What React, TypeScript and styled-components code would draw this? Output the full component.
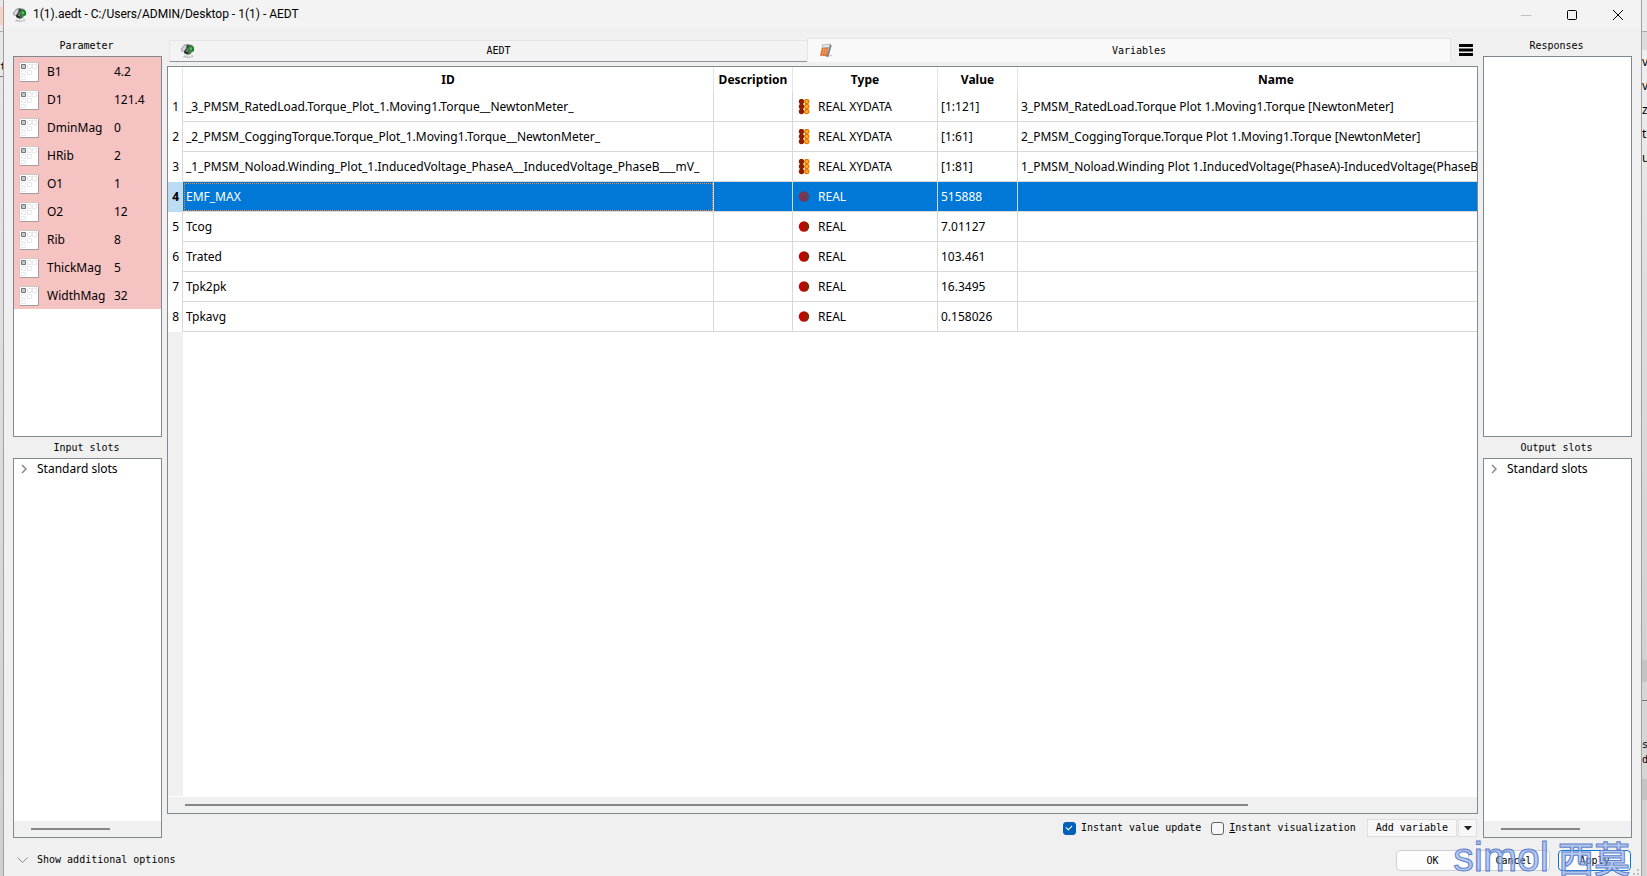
import React from "react";
import styled, { createGlobalStyle, css } from "styled-components";

const sans = `"Noto Sans", "Open Sans", sans-serif`;
const mono = `"DejaVu Sans Mono", "Noto Sans CJK SC", monospace`;
const frame = "#828790";
const face = "#f0f0f0";

const GlobalStyle = createGlobalStyle`
  *, *::before, *::after { box-sizing: border-box; }
  body { margin: 0; background: #d4d4d4; color: #000; font: 12px/20px ${sans}; overflow: hidden; }
  button, input { font: inherit; color: inherit; margin: 0; padding: 0; }
  svg { display: block; flex: none; }
`;

const Desktop = styled.div`
  display: flex;
  height: 100vh;
  min-height: 480px;
`;

const Strip = styled.div<{ $width: number }>`
  flex: none;
  width: ${(p) => p.$width}px;
  display: flex;
  flex-direction: column;
  overflow: hidden;
  white-space: nowrap;
`;

const Band = styled.div<{ $height?: number; $bg: string; $line?: string }>`
  flex: ${(p) => (p.$height ? "none" : "1")};
  height: ${(p) => (p.$height ? `${p.$height}px` : "auto")};
  background: ${(p) => p.$bg};
  border-bottom: ${(p) => (p.$line ? `1px solid ${p.$line}` : "0")};
`;

const StripText = styled.div<{ $mono?: boolean }>`
  font-family: ${(p) => (p.$mono ? mono : sans)};
  font-size: ${(p) => (p.$mono ? 10 : 12)}px;
  line-height: ${(p) => (p.$mono ? 15 : 24)}px;
`;

const Window = styled.main`
  position: relative;
  flex: 1;
  min-width: 0;
  display: flex;
  flex-direction: column;
  border: solid #a0a0a0;
  border-width: 0 1px;
  background: ${face};
`;

const TitleBar = styled.header`
  display: flex;
  align-items: center;
  height: 29px;
  padding-left: 8px;
  background: #f3f3f3;
`;

const Title = styled.h1`
  flex: 1;
  margin: 0 0 2px 5px;
  font: 400 12px/20px Roboto, ${sans};
`;

const CaptionButton = styled.button`
  width: 46px;
  height: 26px;
  display: grid;
  place-items: center;
  border: 0;
  background: none;
`;

const Body = styled.div`
  flex: 1;
  min-height: 0;
  display: grid;
  grid-template-columns: 149px minmax(0, 1fr) 149px;
  gap: 5px;
  padding: 0 9px;
`;

const Side = styled.aside`
  display: flex;
  flex-direction: column;
  min-height: 0;
  padding-top: 6px;
`;

const PaneTitle = styled.h2`
  margin: 0;
  padding-right: 2px;
  font: 400 10px/21px ${mono};
  text-align: center;
`;

const Pane = styled.section`
  flex: 1 1 0;
  min-height: 0;
  display: flex;
  flex-direction: column;
  border: 1px solid ${frame};
  background: #fff;
  overflow: hidden;
`;

const ParamTable = styled.table`
  width: 100%;
  border-collapse: collapse;
  background: #f6c3c3;
  line-height: 20px;

  td, th {
    height: 28px;
    padding: 2px 0 0;
    font-weight: 400;
    text-align: left;
    white-space: nowrap;
  }
  td:first-child { width: 33px; padding-left: 5px; }
  th { width: 67px; }
`;

const TreeItem = styled.button`
  display: flex;
  align-items: center;
  gap: 9px;
  height: 20px;
  padding: 0 6px;
  border: 0;
  background: none;
`;

const Spacer = styled.div`
  flex: 1;
`;

const ScrollTrack = styled.div<{ $inset: number }>`
  flex: none;
  display: flex;
  align-items: center;
  height: 16px;
  padding-left: ${(p) => p.$inset}px;
  background: ${face};
`;

const ScrollThumb = styled.div<{ $share: number }>`
  width: ${(p) => p.$share}%;
  height: 2px;
  background: #868686;
`;

const Center = styled.section`
  display: flex;
  flex-direction: column;
  min-width: 0;
  min-height: 0;
  padding-top: 9px;
`;

const TabBar = styled.div`
  display: flex;
  align-items: flex-end;
  height: 28px;
  padding: 0 0 4px 2px;
`;

const Tab = styled.button<{ $active?: boolean }>`
  flex: 1 1 ${(p) => (p.$active ? 66 : 60)}px;
  display: flex;
  align-items: center;
  height: ${(p) => (p.$active ? 24 : 22)}px;
  padding: 0 6px 0 10px;
  border: 1px solid #e5e5e5;
  border-right-width: ${(p) => (p.$active ? 1 : 0)}px;
  border-bottom: ${(p) => (p.$active ? "0" : "1px solid #919399")};
  background: ${(p) => (p.$active ? "#f9f9f9" : "#f3f3f3")};
  font: 10px/20px ${mono};

  span { flex: 1; }
`;

const MenuButton = styled.button`
  flex: none;
  width: 27px;
  height: 24px;
  display: grid;
  place-items: center;
  padding-left: 2px;
  border: 0;
  background: none;
`;

const GridView = styled.div`
  flex: 1;
  min-height: 0;
  display: flex;
  flex-direction: column;
  border: 1px solid ${frame};
  background: #fff;
  overflow: hidden;
`;

const GridTable = styled.table`
  flex: none;
  width: 1367px;
  min-width: 100%;
  table-layout: fixed;
  border-collapse: separate;
  border-spacing: 0;
  line-height: 20px;
`;

const HeadCell = styled.th`
  height: 25px;
  padding: 0;
  border-right: 1px solid #e5e5e5;
  font-weight: 700;
  text-align: center;
  white-space: nowrap;
`;

const RowHead = styled.th<{ $selected: boolean }>`
  padding: 0 3px 0 0;
  border-right: 1px solid #d8d8d8;
  background: ${(p) => (p.$selected ? "#bcdcf4" : "#fff")};
  font-weight: ${(p) => (p.$selected ? 700 : 400)};
  text-align: right;
`;

const Cell = styled.td<{ $selected: boolean; $focus?: boolean }>`
  height: 30px;
  padding: 0 3px;
  border: solid #d8d8d8;
  border-width: 0 1px 1px 0;
  white-space: nowrap;
  overflow: hidden;
  ${(p) => p.$selected && css`background: #0078d7; color: #fff;`}
  ${(p) => p.$focus && css`outline: 1px dotted #ff8728; outline-offset: -2px;`}
`;

const TypeLabel = styled.span`
  display: flex;
  align-items: center;
  gap: 6px;
`;

const RowGutter = styled.div`
  flex: 1;
  width: 15px;
  margin-bottom: 1px;
  background: ${face};
`;

const Options = styled.div`
  display: flex;
  align-items: center;
  justify-content: flex-end;
  height: 24px;
  padding: 4px 1px 0 0;
  font: 10px/18px ${mono};
`;

const CheckLabel = styled.label`
  display: flex;
  align-items: center;
  gap: 5px;
  margin-right: 10px;
`;

const CheckBox = styled.input`
  appearance: none;
  display: grid;
  place-items: center;
  width: 13px;
  height: 13px;
  border: 1px solid #626262;
  border-radius: 3px;
  background: #f6f6f6;

  &:checked { background: #005fb8; border-color: #005fb8; }
  &:checked::after {
    content: "";
    width: 6px;
    height: 4px;
    border: solid #fff;
    border-width: 0 0 1px 1px;
    transform: translateY(-1px) rotate(-45deg);
  }
`;

const FlatButton = styled.button`
  display: grid;
  place-items: center;
  height: 18px;
  min-width: 19px;
  border: 1px solid #dfdfdf;
  background: #f7f7f7;
  margin-left: 1px;

  span { padding: 0 8px; line-height: 16px; }
`;

const Footer = styled.footer`
  display: flex;
  align-items: center;
  gap: 8px;
  height: 38px;
  padding: 6px 10px 0 13px;
  font: 10px/20px ${mono};
`;

const Disclosure = styled.button`
  display: flex;
  align-items: center;
  gap: 9px;
  margin-right: auto;
  border: 0;
  background: none;
`;

const PushButton = styled.button<{ $primary?: boolean }>`
  width: 73px;
  height: 21px;
  border: 1px solid ${(p) => (p.$primary ? "#0078d4" : "#d0d0d0")};
  border-radius: 4px;
  background: #fdfdfd;
`;

const Watermark = styled.div`
  position: absolute;
  right: 11px;
  bottom: 1px;
  display: flex;
  align-items: center;
  gap: 9px;
  pointer-events: none;
  color: rgba(140, 170, 230, 0.6);
  -webkit-text-stroke: 1px #5b7fce;
  font: 41px/36px "Liberation Sans", sans-serif;

  b { font: 500 36px/36px "Noto Sans CJK SC", sans-serif; }
`;

const Grip = styled.svg`
  position: absolute;
  right: 2px;
  bottom: 1px;
`;

const AppIcon = () => (
  <svg width="16" height="16" viewBox="0 0 16 16" aria-hidden="true">
    <path d="M1 6 3 3.500 4 2l3-1 3 .5 2 .5 2 2.500V8l-2 1-1 2-3 .5-3-1-1-2-2 .5z" fill="#7f8682" />
    <path d="m2 6 2-3 3-1-1 3-2 3-2 .5z" fill="#d3d6d4" />
    <path d="m7 2 3 .5L8 5 6 6z" fill="#39423c" />
    <path d="m8 5 2-2.500 2.500.5L14 5v3l-2.500 1L9 8z" fill="#1f7a2b" />
    <path d="m10 4 2.500 1L11 8 9.500 6z" fill="#4fcb58" />
    <path d="M4 8.500 6.500 6 9 8.500l1.500 2.500-3 .5-3-1z" fill="#27302a" />
    <path d="m6 8 1-1 1 1.500L7 9z" fill="#b9beba" />
    <path d="m8 9 2 1-1 1.500H8z" fill="#2f9a3c" />
    <path d="M4 14.500V13h1.500v1.500M6.500 13H8M6.500 14.500H8M9 13v1.500h1.500M11 13h2M12 13v1.500" fill="none" stroke="#b0b0b0" />
  </svg>
);

const CalcIcon = () => (
  <svg width="16" height="16" viewBox="0 0 16 16" aria-hidden="true">
    <path d="m4 1.500 9-1-2 13-8-.5z" fill="#b9bcbe" />
    <path d="m5 2.500 6-.7-.3 2-6 .5z" fill="#e9ecee" />
    <path d="m4 5 6-.5L9 13l-7-.5z" fill="#e06a23" />
    <path d="m4 7.500 5.500-.4M3.500 10l5.700-.2M5.800 5 4.500 12.500M8 5l-1 7.500" stroke="#f6ab75" strokeWidth=".7" />
    <path d="m13 2-3 10-1 2" fill="none" stroke="#777b7e" strokeWidth="1.500" />
    <path d="m11 13 3-.5" stroke="#c3c6c8" />
  </svg>
);

const ParamIcon = () => (
  <svg width="20" height="20" viewBox="0 0 20 20" aria-hidden="true">
    <path d="M.5.5h19v19H.5z" fill="#fff" stroke="#cfc6c6" />
    <path d="M19.500 1v18.500H1" fill="none" stroke="#a39c9c" />
    <path d="M2.500 2.500h4v4h-4z" fill="#c6c6c6" stroke="#777" />
    <path d="M8.500 2.500h4v4h-4zM13.500 2.500h4v4h-4zM2.500 8.500h4v4h-4zM8.500 8.500h4v4h-4zM2.500 14.500h4v3h-4z" fill="#fff" stroke="#e8e8e8" />
  </svg>
);

const RealIcon = ({ selected }: { selected: boolean }) => (
  <svg width="16" height="16" viewBox="0 0 16 16" aria-hidden="true">
    <defs>
      <linearGradient id={selected ? "dotSelected" : "dot"}>
        <stop offset="0.2" stopColor={selected ? "#8a3050" : "#cc0000"} />
        <stop offset="1" stopColor={selected ? "#5a4560" : "#7a2a00"} />
      </linearGradient>
    </defs>
    <circle cx="8" cy="7.500" r="5.200" fill={`url(#${selected ? "dotSelected" : "dot"})`} />
  </svg>
);

const XyIcon = () => (
  <svg width="16" height="16" viewBox="0 0 16 16" aria-hidden="true">
    <path d="M5.500 0v15" stroke="#8b2500" strokeWidth="3" />
    <path d="M10.500 0v15" stroke="#c35400" strokeWidth="3" />
    {[2.5, 7.5, 12.5].map((y) => (
      <g key={y}>
        <circle cx="5.500" cy={y} r="2.700" fill="#8f1d00" />
        <circle cx="10.800" cy={y} r="2.700" fill="#e87800" />
        <circle cx="10.800" cy={y} r="1.500" fill="#ffb01f" />
      </g>
    ))}
  </svg>
);

const Chevron = ({ down }: { down?: boolean }) => (
  <svg width={down ? 11 : 8} height="10" viewBox={down ? "0 0 11 10" : "0 0 8 10"} fill="none" stroke="#8a8a8a" aria-hidden="true">
    {down ? <path d="m.5 2.500 5 5 5-5" /> : <path d="m2 1 4 4-4 4" strokeWidth="1.500" />}
  </svg>
);

const params = [
  ["B1", "4.2"], ["D1", "121.4"], ["DminMag", "0"], ["HRib", "2"], ["O1", "1"],
  ["O2", "12"], ["Rib", "8"], ["ThickMag", "5"], ["WidthMag", "32"],
];

const variables = [
  { id: "_3_PMSM_RatedLoad.Torque_Plot_1.Moving1.Torque__NewtonMeter_", type: "REAL XYDATA", value: "[1:121]", name: "3_PMSM_RatedLoad.Torque Plot 1.Moving1.Torque [NewtonMeter]" },
  { id: "_2_PMSM_CoggingTorque.Torque_Plot_1.Moving1.Torque__NewtonMeter_", type: "REAL XYDATA", value: "[1:61]", name: "2_PMSM_CoggingTorque.Torque Plot 1.Moving1.Torque [NewtonMeter]" },
  { id: "_1_PMSM_Noload.Winding_Plot_1.InducedVoltage_PhaseA__InducedVoltage_PhaseB___mV_", type: "REAL XYDATA", value: "[1:81]", name: "1_PMSM_Noload.Winding Plot 1.InducedVoltage(PhaseA)-InducedVoltage(PhaseB) [mV]" },
  { id: "EMF_MAX", type: "REAL", value: "515888", name: "" },
  { id: "Tcog", type: "REAL", value: "7.01127", name: "" },
  { id: "Trated", type: "REAL", value: "103.461", name: "" },
  { id: "Tpk2pk", type: "REAL", value: "16.3495", name: "" },
  { id: "Tpkavg", type: "REAL", value: "0.158026", name: "" },
];

const selectedId = "EMF_MAX";

const SlotsPane = ({ title }: { title: string }) => (
  <>
    <PaneTitle>{title}</PaneTitle>
    <Pane aria-label={title}>
      <TreeItem><Chevron />Standard slots</TreeItem>
      <Spacer />
      <ScrollTrack $inset={17}><ScrollThumb $share={61} /></ScrollTrack>
    </Pane>
  </>
);

const VariableTable = () => (
  <GridTable>
    <colgroup>
      <col width="15" /><col width="531" /><col width="79" />
      <col width="145" /><col width="80" /><col width="517" />
    </colgroup>
    <thead>
      <tr>
        <HeadCell />
        {["ID", "Description", "Type", "Value", "Name"].map((h) => (
          <HeadCell key={h} scope="col">{h}</HeadCell>
        ))}
      </tr>
    </thead>
    <tbody>
      {variables.map((v, i) => {
        const selected = v.id === selectedId;
        return (
          <tr key={v.id}>
            <RowHead scope="row" $selected={selected}>{i + 1}</RowHead>
            <Cell $selected={selected} $focus={selected}>{v.id}</Cell>
            <Cell $selected={selected} />
            <Cell $selected={selected}>
              <TypeLabel>
                {v.type === "REAL" ? <RealIcon selected={selected} /> : <XyIcon />}
                {v.type}
              </TypeLabel>
            </Cell>
            <Cell $selected={selected}>{v.value}</Cell>
            <Cell $selected={selected}>{v.name}</Cell>
          </tr>
        );
      })}
    </tbody>
  </GridTable>
);

export default function App() {
  return (
    <Desktop>
      <GlobalStyle />
      <Strip $width={3} aria-hidden="true">
        <Band $height={7} $bg="#e9e9e9" />
        <Band $height={18} $bg="#f4d3c0" />
        <Band $height={7} $bg="#e9e9e9" $line="#aaa" />
        <Band $height={27} $bg="#e6e6e6" />
        <Band $height={18} $bg="#e9e9e9" $line="#777"><StripText $mono>t</StripText></Band>
        <Band $bg="linear-gradient(#e6e6e6, #cfcfcf)" />
      </Strip>
      <Window>
        <TitleBar>
          <AppIcon />
          <Title>1(1).aedt - C:/Users/ADMIN/Desktop - 1(1) - AEDT</Title>
          <CaptionButton aria-label="Minimize">
            <svg width="10" height="10"><path d="M0 5.500h10" stroke="#c0c0c0" /></svg>
          </CaptionButton>
          <CaptionButton aria-label="Maximize">
            <svg width="10" height="10" fill="none" stroke="#000"><rect x=".5" y=".5" width="9" height="9" rx="1" /></svg>
          </CaptionButton>
          <CaptionButton aria-label="Close">
            <svg width="10" height="10" stroke="#000"><path d="m0 0 10 10M10 0 0 10" /></svg>
          </CaptionButton>
        </TitleBar>
        <Body>
          <Side>
            <PaneTitle>Parameter</PaneTitle>
            <Pane aria-label="Parameter">
              <ParamTable>
                <tbody>
                  {params.map(([name, value]) => (
                    <tr key={name}>
                      <td><ParamIcon /></td>
                      <th scope="row">{name}</th>
                      <td>{value}</td>
                    </tr>
                  ))}
                </tbody>
              </ParamTable>
            </Pane>
            <SlotsPane title="Input slots" />
          </Side>
          <Center>
            <TabBar role="tablist">
              <Tab role="tab"><AppIcon /><span>AEDT</span></Tab>
              <Tab role="tab" aria-selected="true" $active><CalcIcon /><span>Variables</span></Tab>
              <MenuButton aria-label="Menu">
                <svg width="14" height="12"><path d="M0 1.500h14M0 6h14M0 10.500h14" stroke="#000" strokeWidth="3" /></svg>
              </MenuButton>
            </TabBar>
            <GridView>
              <VariableTable />
              <RowGutter />
              <ScrollTrack $inset={17}><ScrollThumb $share={82.3} /></ScrollTrack>
            </GridView>
            <Options>
              <CheckLabel><CheckBox type="checkbox" defaultChecked />Instant value update</CheckLabel>
              <CheckLabel><CheckBox type="checkbox" /><span><u>I</u>nstant visualization</span></CheckLabel>
              <FlatButton><span>Add variable</span></FlatButton>
              <FlatButton aria-label="More variable types">
                <svg width="8" height="5"><path d="M0 0h8L4 4.500z" fill="#222" /></svg>
              </FlatButton>
            </Options>
          </Center>
          <Side>
            <PaneTitle>Responses</PaneTitle>
            <Pane aria-label="Responses" />
            <SlotsPane title="Output slots" />
          </Side>
        </Body>
        <Footer>
          <Disclosure><Chevron down />Show additional options</Disclosure>
          <PushButton>OK</PushButton>
          <PushButton>Cancel</PushButton>
          <PushButton $primary>Apply</PushButton>
        </Footer>
        <Watermark>simol<b>西莫</b></Watermark>
        <Grip width="6" height="6" fill="#bdbdbd" aria-hidden="true">
          <path d="M4 0h2v2H4zM4 4h2v2H4zM0 4h2v2H0z" />
        </Grip>
      </Window>
      <Strip $width={5} aria-hidden="true">
        <Band $height={32} $bg="#ececec" $line="#aaa" />
        <Band $height={18} $bg="#dcdcdc" />
        <Band $bg="linear-gradient(#f0f0f0, #dedede 40%, #d2d2d2)">
          <StripText>v</StripText>
          <StripText>vi</StripText>
          <StripText>z</StripText>
          <StripText>tr</StripText>
          <StripText>u</StripText>
        </Band>
        <Band $height={22} $bg="#c4c4c4" />
        <Band $height={19} $bg="#d6d6d6" $line="#777" />
        <Band $height={36} $bg="#d6d6d6" />
        <Band $height={42} $bg="#d6d6d6">
          <StripText $mono>s</StripText>
          <StripText $mono>d</StripText>
        </Band>
        <Band $height={21} $bg="#c4c4c4" />
        <Band $height={76} $bg="#d2d2d2" />
      </Strip>
    </Desktop>
  );
}
